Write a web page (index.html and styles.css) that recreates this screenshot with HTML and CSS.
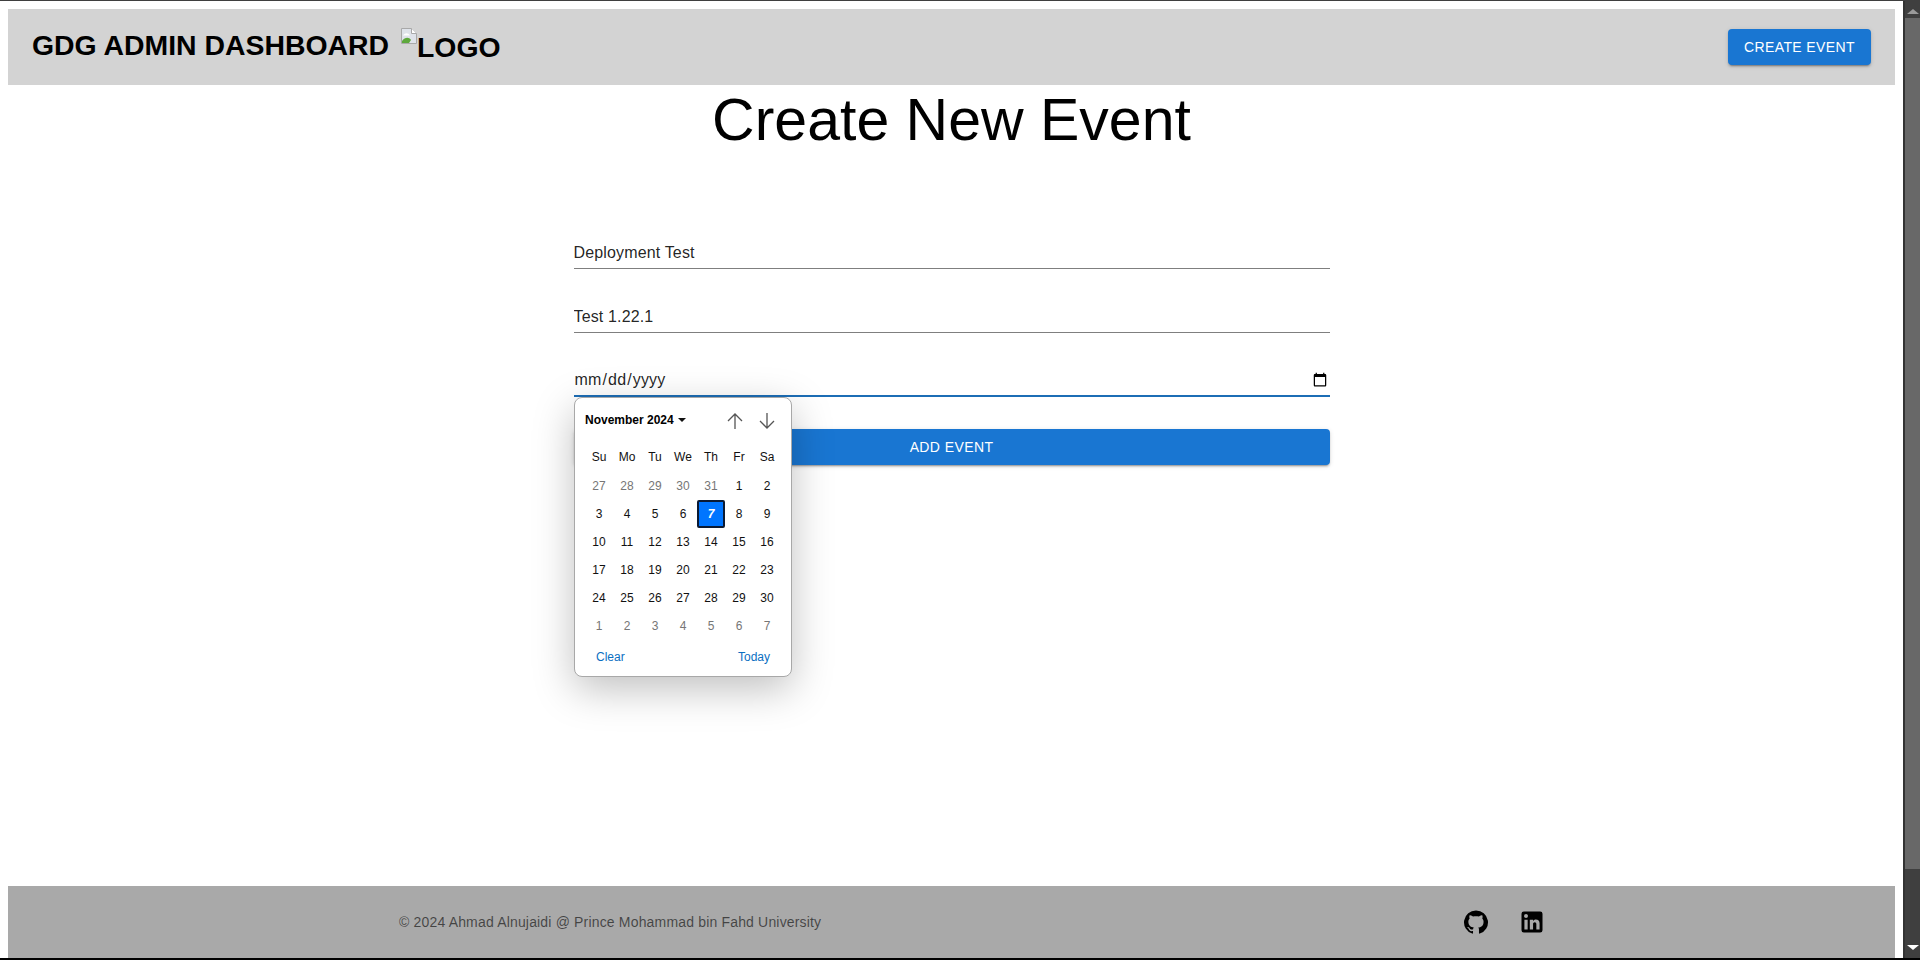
FILE: index.html
```html
<!DOCTYPE html>
<html lang="en">
<head>
<meta charset="utf-8">
<title>GDG Admin Dashboard</title>
<link rel="stylesheet" href="styles.css">
</head>
<body>
<div class="topline"></div>
<div class="window">
  <div class="page">
    <header class="appbar">
      <div class="brand">
        <span class="brand-title">GDG ADMIN DASHBOARD</span>
        <span class="logo">
          <svg class="broken" viewBox="0 0 16 16" width="16" height="16" aria-hidden="true">
            <path d="M0.5 0.5H10.5L15.5 5.5V15.5H0.5Z" fill="#dfe3ea" stroke="#a8a8a8"/>
            <path d="M10.5 0.5V5.5H15.5" fill="#fff" stroke="#a8a8a8"/>
            <path d="M2 7.5C4 4.5 7 4.5 9 7.5H2Z" fill="#fff"/>
            <path d="M1 15V13C4 9 8 9 10 12L8 15Z" fill="#5da83c"/>
          </svg><span class="logo-alt">LOGO</span>
        </span>
      </div>
      <button class="btn btn-create" type="button">CREATE EVENT</button>
    </header>
    <main class="content">
      <h1 class="title">Create New Event</h1>
      <form class="form">
        <div class="field"><input class="input" type="text" value="Deployment Test"></div>
        <div class="field"><input class="input" type="text" value="Test 1.22.1"></div>
        <div class="field field-focus"><input class="input" type="date"></div>
        <button class="btn btn-add" type="button">ADD EVENT</button>
        <div class="picker">
          <div class="picker-head">
            <span class="month">November 2024<span class="caret"></span></span>
            <span class="arrows">
              <svg viewBox="0 0 16 16" width="16" height="16" aria-hidden="true"><path d="M8 16V1M1 8L8 1L15 8" fill="none" stroke="#555" stroke-width="1.3"/></svg>
              <svg viewBox="0 0 16 16" width="16" height="16" aria-hidden="true"><path d="M8 0V15M1 8L8 15L15 8" fill="none" stroke="#555" stroke-width="1.3"/></svg>
            </span>
          </div>
          <div class="days">
            <span class="dow">Su</span><span class="dow">Mo</span><span class="dow">Tu</span><span class="dow">We</span><span class="dow">Th</span><span class="dow">Fr</span><span class="dow">Sa</span>
            <span class="day off">27</span><span class="day off">28</span><span class="day off">29</span><span class="day off">30</span><span class="day off">31</span><span class="day">1</span><span class="day">2</span>
            <span class="day">3</span><span class="day">4</span><span class="day">5</span><span class="day">6</span><span class="day sel">7</span><span class="day">8</span><span class="day">9</span>
            <span class="day">10</span><span class="day">11</span><span class="day">12</span><span class="day">13</span><span class="day">14</span><span class="day">15</span><span class="day">16</span>
            <span class="day">17</span><span class="day">18</span><span class="day">19</span><span class="day">20</span><span class="day">21</span><span class="day">22</span><span class="day">23</span>
            <span class="day">24</span><span class="day">25</span><span class="day">26</span><span class="day">27</span><span class="day">28</span><span class="day">29</span><span class="day">30</span>
            <span class="day off">1</span><span class="day off">2</span><span class="day off">3</span><span class="day off">4</span><span class="day off">5</span><span class="day off">6</span><span class="day off">7</span>
          </div>
          <div class="picker-foot"><span class="link">Clear</span><span class="link">Today</span></div>
        </div>
      </form>
    </main>
    <footer class="footer">
      <p class="copy">© 2024 Ahmad Alnujaidi @ Prince Mohammad bin Fahd University</p>
      <div class="socials">
        <svg class="social social-gh" viewBox="0 0 24 24" aria-hidden="true"><path d="M12 1.27a11 11 0 00-3.48 21.46c.55.09.73-.28.73-.55v-1.84c-3.03.64-3.67-1.46-3.67-1.46-.55-1.29-1.28-1.65-1.28-1.65-.92-.65.1-.65.1-.65 1.1 0 1.73 1.1 1.73 1.1.92 1.65 2.57 1.2 3.21.92a2 2 0 01.64-1.47c-2.47-.27-5.04-1.19-5.04-5.5 0-1.1.46-2.1 1.2-2.84a3.76 3.76 0 010-2.93s.91-.28 3.11 1.1c1.8-.49 3.7-.49 5.5 0 2.1-1.38 3.02-1.1 3.02-1.1a3.76 3.76 0 010 2.93c.83.74 1.2 1.74 1.2 2.94 0 4.21-2.57 5.13-5.04 5.4.45.37.82.92.82 2.02v3.03c0 .27.1.64.73.55A11 11 0 0012 1.27"/></svg>
        <svg class="social" viewBox="0 0 24 24" aria-hidden="true"><path d="M19 3a2 2 0 0 1 2 2v14a2 2 0 0 1-2 2H5a2 2 0 0 1-2-2V5a2 2 0 0 1 2-2h14m-.5 15.5v-5.3a3.26 3.26 0 0 0-3.26-3.26c-.85 0-1.84.52-2.32 1.3v-1.11h-2.79v8.37h2.79v-4.93c0-.77.62-1.4 1.39-1.4a1.4 1.4 0 0 1 1.4 1.4v4.93h2.79M6.88 8.56a1.68 1.68 0 0 0 1.68-1.68c0-.93-.75-1.69-1.68-1.69a1.69 1.69 0 0 0-1.69 1.69c0 .93.76 1.68 1.69 1.68m1.39 9.94v-8.37H5.5v8.37h2.77z"/></svg>
      </div>
    </footer>
  </div>
  <div class="scrollbar">
    <span class="sb-up"></span>
    <span class="sb-thumb"></span>
    <span class="sb-track"></span>
    <span class="sb-down"></span>
  </div>
</div>
<div class="bottomline"></div>
</body>
</html>
```
FILE: styles.css
```css
* { box-sizing: border-box; }
html, body { height: 100%; margin: 0; }
body {
  display: flex;
  flex-direction: column;
  overflow: hidden;
  background: #fff;
  font-family: "Liberation Sans", Arial, sans-serif;
  color: #000;
}
.topline { height: 1px; background: #3f3f3f; flex: none; }
.bottomline { height: 2px; background: #000; flex: none; }
.window { flex: 1; display: flex; min-height: 0; }
.page {
  flex: 1;
  display: flex;
  flex-direction: column;
  padding: 8px 8px 0 8px;
  min-width: 0;
}
.appbar {
  height: 76px;
  flex: none;
  background: #d3d3d3;
  display: flex;
  align-items: center;
  justify-content: space-between;
  padding: 0 24px 0 24px;
}
.brand { display: flex; align-items: center; gap: 12px; font-weight: 700; font-size: 28.4px; padding-bottom: 4px; }
.brand-title { line-height: 33px; }
.logo { display: flex; align-items: flex-start; height: 36px; }
.broken { flex: none; margin-top: 1px; }
.logo-alt { line-height: 33px; margin-top: 4px; }
.btn {
  border: 0;
  border-radius: 4px;
  background: #1976d2;
  color: #fff;
  font: 500 14px/26px "Liberation Sans", Arial, sans-serif;
  letter-spacing: .4px;
  box-shadow: 0 3px 1px -2px rgba(0,0,0,.2), 0 2px 2px rgba(0,0,0,.14), 0 1px 5px rgba(0,0,0,.12);
}
.btn-create { width: 143px; height: 36px; padding: 0; }
.content { flex: 1; display: flex; flex-direction: column; align-items: center; min-height: 0; }
.title { margin: 0; font-size: 59px; font-weight: 400; line-height: 70px; }
.form {
  position: relative;
  width: 756px;
  margin-top: 82px;
  display: flex;
  flex-direction: column;
}
.field { height: 32px; margin-bottom: 32px; border-bottom: 1px solid #7f7f7f; display: flex; }
.field-focus { border-bottom: 2px solid #1c6db5; }
.input {
  flex: 1;
  min-width: 0;
  border: 0;
  outline: 0;
  padding: 4px 0 5px;
  background: transparent;
  color: rgba(0,0,0,.87);
  font: 400 16px/23px "Liberation Sans", Arial, sans-serif;
  letter-spacing: .15px;
}
.btn-add { width: 100%; height: 36px; padding: 0; }
.picker {
  position: absolute;
  left: .5px;
  top: 160px;
  width: 218px;
  height: 280px;
  background: #fff;
  border: 1px solid #a8a8a8;
  border-radius: 8px;
  box-shadow: 0 12px 40px rgba(0,0,0,.25);
  padding: 0 10px;
  font-size: 12px;
  display: flex;
  flex-direction: column;
}
.picker-head { height: 43px; flex: none; display: flex; align-items: center; justify-content: space-between; padding-right: 6px; }
.month { font-weight: 700; display: flex; align-items: center; }
.caret { margin-left: 4px; width: 0; height: 0; border: 4px solid transparent; border-top-color: #111; border-bottom: 0; }
.arrows { display: flex; gap: 16px; margin-top: 3px; }
.days {
  display: grid;
  grid-template-columns: repeat(7, 28px);
  grid-template-rows: 29px;
  grid-auto-rows: 28px;
  margin-top: 2px;
}
.dow, .day { display: flex; align-items: center; justify-content: center; color: #111; }
.dow { padding-bottom: 2px; }
.off { color: #767676; }
.sel {
  background: #0075ff;
  border: 2px solid #0b1a33;
  border-radius: 2px;
  color: #fff;
  font-weight: 700;
  font-style: italic;
}
.picker-foot { display: flex; justify-content: space-between; padding: 10px 11px 0; }
.link { color: #0b6fc2; }
.footer {
  margin-top: auto;
  height: 72px;
  flex: none;
  background: #a9a9a9;
  display: flex;
  align-items: center;
  padding: 0 0 0 391px;
}
.copy { margin: 0; font-size: 14px; line-height: 20px; letter-spacing: .17px; color: rgba(0,0,0,.6); width: 1063px; }
.socials { display: flex; gap: 28px; align-items: center; }
.social { width: 28px; height: 28px; fill: #000; display: block; }
.social-gh { width: 26px; height: 26px; margin: 0 1px; }
.scrollbar {
  flex: none;
  width: 17px;
  background: #3f3f3f;
  display: flex;
  flex-direction: column;
  align-items: center;
  border-left: 2px solid #333;
}
.sb-up, .sb-down { width: 0; height: 0; border-left: 6px solid transparent; border-right: 6px solid transparent; flex: none; }
.sb-up { margin: 8px 0 4px; border-bottom: 5px solid #9a9a9a; }
.sb-thumb { width: 100%; height: 851px; flex: none; background: #686868; }
.sb-track { flex: 1; }
.sb-down { margin-bottom: 8px; border-top: 5px solid #fff; }
```
